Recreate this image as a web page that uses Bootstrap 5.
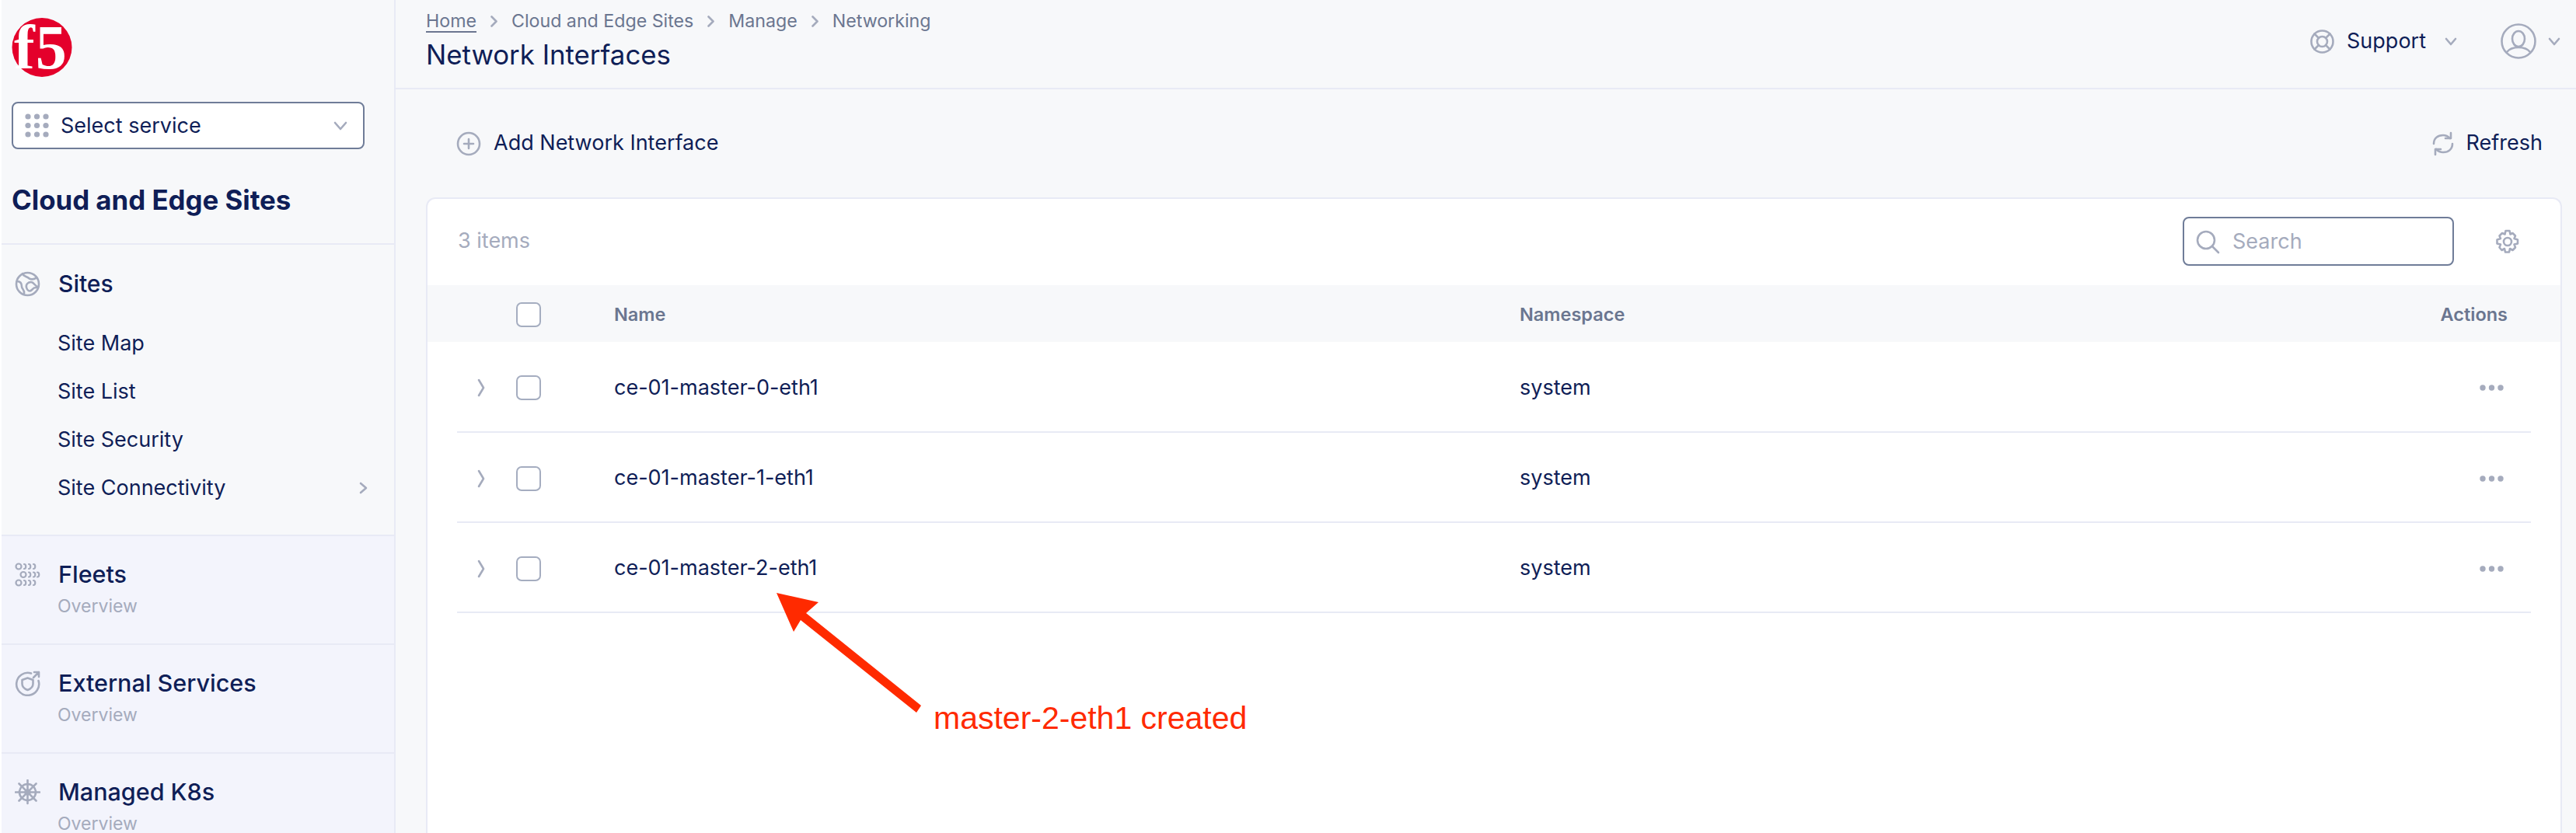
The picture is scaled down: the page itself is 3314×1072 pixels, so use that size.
<!DOCTYPE html>
<html lang="en">
<head>
<meta charset="utf-8">
<title>Network Interfaces</title>
<link href="https://cdn.jsdelivr.net/npm/bootstrap@5.3.0/dist/css/bootstrap.min.css" rel="stylesheet">
<style>
:root{--navy:#0f1e57;--muted:#a5abbd;--slate:#6b7690;--line:#e8eaf5;--page:#f7f8fa}
html,body{height:100%}
body{font-family:Inter,"Liberation Sans",sans-serif;font-size:27px;color:var(--navy);background:#fff;overflow:hidden;padding-left:2px;position:relative}
.ico{stroke:var(--muted);fill:none;stroke-width:2.6;stroke-linecap:round;stroke-linejoin:round;flex:none;display:block}
.ico-fill{fill:var(--muted);stroke:none}
.side{width:507px;flex:none;background:var(--page);border-right:2px solid var(--line);height:100%;overflow:hidden}
.side > *{flex:none}
.side-top{height:315px;padding:23px 38px 0 13px;border-bottom:2px solid var(--line)}
.logo{display:block;margin-bottom:32px;overflow:visible}
.svc{height:61px;border:2px solid #6f7c98;border-radius:8px;background:#fff;padding:0 20px 0 15px}
.svc span{margin-left:15px;font-size:27px;line-height:1}
.side-title{font-size:34.800px;font-weight:700;line-height:40px;margin:45px 0 0}
.sec{height:375px;padding:30px 0 0 17px;border-bottom:2px solid var(--line)}
.sec-head{height:40px;font-size:30px;font-weight:500;gap:23px;margin-bottom:26px}
.sub{height:62px;padding:0 34px 0 55px;font-size:27px}
.grp{height:140px;background:#f3f4fc;padding:29px 0 0 17px;border-bottom:2px solid var(--line)}
.grp-t{gap:23px;height:40px;font-size:30.500px;font-weight:500}
.grp-s{font-size:23px;color:var(--muted);margin:11px 0 0 55px;line-height:20px}
.main{background:var(--page);min-width:0;height:100%}
.top{height:115px;padding:0 20px 0 39px;border-bottom:2px solid var(--line);flex:none}
.crumbs{height:54px;font-size:23.200px;color:var(--slate);gap:18px;line-height:30px}
.crumbs u{text-underline-offset:5px;text-decoration-thickness:2px}
.page-t{font-size:34.800px;font-weight:400;line-height:32px;margin:0}
.top-r{padding-top:29px}
.tool{height:139px;padding:0 43px 0 78px;flex:none}
.tool-b{gap:16px;font-size:27px}
.panel{margin:0 18px 0 39px;background:#fff;border:2px solid var(--line);border-bottom:0;border-radius:12px 12px 0 0;flex:1 1 auto;min-height:0;overflow:hidden}
.panel-h{height:111px;padding:0 52px 2px 39px}
.count{color:var(--muted);font-size:27px}
.srch{width:349px;height:63px;border:2px solid #6f7c98;border-radius:8px;padding:2px 15px 0;gap:16px;color:var(--muted);font-size:27px;margin-right:53px}
.grid-t{table-layout:fixed;width:100%;border-collapse:collapse;margin:0}
.grid-t th{height:73px;background:var(--page);font-size:23.500px;font-weight:600;color:var(--slate);padding:2px 0 0;border:0;vertical-align:middle}
.grid-t td{height:116px;padding:3px 0 0;font-size:27px;color:var(--navy);border:0;border-bottom:2px solid var(--line);background:#fff;vertical-align:middle}
.grid-t td.gut{border-bottom:0}
.expander{margin-left:26px}
.tick{width:32px;height:32px;border:2px solid #a5adc0;border-radius:7px;background:#fff;display:block}
.dots{margin-right:35px}
.arrow{position:absolute;left:990px;top:755px}
.note{position:absolute;left:1201px;top:900px;font-family:"Liberation Sans",Arial,sans-serif;font-size:41px;line-height:48px;color:#ff2a00;white-space:nowrap}
</style>
</head>
<body class="d-flex">
<aside class="side d-flex flex-column">
  <div class="side-top">
    <svg class="logo" width="78" height="76" viewBox="0 0 78 76" role="img" aria-label="F5">
      <ellipse cx="39" cy="38" rx="38.500" ry="38" fill="#e4002b"/>
      <text x="3" y="65" font-family="Liberation Serif" font-weight="700" font-size="80" letter-spacing="1" fill="#fff">f5</text>
    </svg>
    <div class="svc d-flex align-items-center">
      <svg width="31" height="31" viewBox="0 0 31 31" class="ico-fill flex-none"><circle cx="4" cy="4" r="3.6"/><circle cx="15.500" cy="4" r="3.600"/><circle cx="27" cy="4" r="3.600"/><circle cx="4" cy="15.500" r="3.600"/><circle cx="15.500" cy="15.500" r="3.600"/><circle cx="27" cy="15.500" r="3.600"/><circle cx="4" cy="27" r="3.600"/><circle cx="15.500" cy="27" r="3.600"/><circle cx="27" cy="27" r="3.600"/></svg>
      <span>Select service</span>
      <svg class="ico ms-auto" width="18" height="12" viewBox="0 0 18 12"><path d="M2 2l7 8 7-8"/></svg>
    </div>
    <h2 class="side-title">Cloud and Edge Sites</h2>
  </div>
  <div class="sec">
    <div class="sec-head d-flex align-items-center">
      <svg class="ico" width="33" height="33" viewBox="0 0 33 33"><circle cx="16.500" cy="16.500" r="14.500"/><path d="M10 3c1 4 6 4 8 6s7 2 10-1M3 13c5 0 6 4 6 7s4 4 3 9M30 20c-4 0-5-6-9-6s-7 3-6 7 4 6 7 3 3-3 7-3"/></svg>
      <span>Sites</span>
    </div>
    <div class="sub d-flex align-items-center">Site Map</div>
    <div class="sub d-flex align-items-center">Site List</div>
    <div class="sub d-flex align-items-center">Site Security</div>
    <div class="sub d-flex align-items-center justify-content-between">Site Connectivity
      <svg class="ico" width="11" height="16" viewBox="0 0 11 16"><path d="M2 2l7 6-7 6"/></svg>
    </div>
  </div>
  <div class="grp">
    <div class="grp-t d-flex align-items-center">
      <svg class="ico" style="stroke-width:2.2" width="33" height="31" viewBox="0 0 33 31"><circle cx="5" cy="5" r="3.500"/><path d="M12 2c3 0 3 6 0 6M18 2c3 0 3 6 0 6M24 2c3 0 3 6 0 6"/><circle cx="11" cy="15.500" r="3.500"/><path d="M18 12.500c3 0 3 6 0 6M24 12.500c3 0 3 6 0 6M29 12.500c3 0 3 6 0 6"/><circle cx="5" cy="26" r="3.500"/><path d="M12 23c3 0 3 6 0 6M18 23c3 0 3 6 0 6M24 23c3 0 3 6 0 6"/></svg>
      <span>Fleets</span>
    </div>
    <div class="grp-s">Overview</div>
  </div>
  <div class="grp">
    <div class="grp-t d-flex align-items-center">
      <svg class="ico" width="33" height="33" viewBox="0 0 33 33"><path d="M21 3.500A14.500 14.500 0 1 0 30.500 13"/><path d="M24 9l7-7M25 2h6v6"/><path d="M16.500 9.500l7 2.500v5c0 4-3 6.500-7 8-4-1.500-7-4-7-8v-5z"/></svg>
      <span>External Services</span>
    </div>
    <div class="grp-s">Overview</div>
  </div>
  <div class="grp">
    <div class="grp-t d-flex align-items-center">
      <svg class="ico" width="33" height="33" viewBox="0 0 33 33"><circle cx="16.500" cy="16.500" r="10.500"/><circle cx="16.500" cy="16.500" r="3"/><path d="M16.500 1v30M1 16.500h31M5.500 5.500l22 22M27.500 5.500l-22 22"/></svg>
      <span>Managed K8s</span>
    </div>
    <div class="grp-s">Overview</div>
  </div>
</aside>

<main class="main flex-grow-1 d-flex flex-column">
  <header class="top d-flex justify-content-between">
    <div>
      <nav class="crumbs d-flex align-items-center" aria-label="breadcrumb">
        <u>Home</u>
        <svg class="ico" width="9" height="15" viewBox="0 0 9 15"><path d="M1.500 1.500l6 6-6 6"/></svg>
        <span>Cloud and Edge Sites</span>
        <svg class="ico" width="9" height="15" viewBox="0 0 9 15"><path d="M1.500 1.500l6 6-6 6"/></svg>
        <span>Manage</span>
        <svg class="ico" width="9" height="15" viewBox="0 0 9 15"><path d="M1.500 1.500l6 6-6 6"/></svg>
        <span>Networking</span>
      </nav>
      <h1 class="page-t">Network Interfaces</h1>
    </div>
    <div class="top-r d-flex align-items-start">
      <div class="d-flex align-items-center" style="height:48px">
        <svg class="ico" width="31" height="31" viewBox="0 0 31 31"><circle cx="15.500" cy="15.500" r="14"/><circle cx="15.500" cy="15.500" r="6.500"/><path d="M5.500 5.500l5.500 5.500M25.500 5.500L20 11M5.500 25.500l5.500-5.500M25.500 25.500L20 20"/></svg>
        <span class="ms-3">Support</span>
        <svg class="ico" style="margin-left:24px;margin-right:56px" width="16" height="11" viewBox="0 0 16 11"><path d="M2 2l6 7 6-7"/></svg>
        <svg class="ico" width="46" height="46" viewBox="0 0 46 46"><circle cx="23" cy="23" r="21.500"/><ellipse cx="23" cy="20" rx="8" ry="10"/><path d="M8 37c4-5 9-6 15-6s11 1 15 6"/></svg>
        <svg class="ico" style="margin-left:15px" width="16" height="11" viewBox="0 0 16 11"><path d="M2 2l6 7 6-7"/></svg>
      </div>
    </div>
  </header>

  <div class="tool d-flex align-items-center justify-content-between">
    <div class="tool-b d-flex align-items-center">
      <svg class="ico" width="32" height="32" viewBox="0 0 32 32"><circle cx="16" cy="16" r="14"/><path d="M16 10v12M10 16h12"/></svg>
      <span>Add Network Interface</span>
    </div>
    <div class="tool-b d-flex align-items-center">
      <svg class="ico" width="28" height="32" viewBox="0 0 28 32"><path d="M2 16C2 9 7 5 14 5c3 0 6 1 9 4M26 16c0 7-5 11-12 11-3 0-6-1-9-4"/><path d="M24 2v7h-7M4 30v-7h7"/></svg>
      <span>Refresh</span>
    </div>
  </div>

  <section class="panel">
    <div class="panel-h d-flex align-items-center justify-content-between">
      <span class="count">3 items</span>
      <div class="d-flex align-items-center">
        <div class="srch d-flex align-items-center">
          <svg class="ico" width="31" height="31" viewBox="0 0 31 31"><circle cx="13" cy="13" r="11"/><path d="M21 21l8 8"/></svg>
          <span>Search</span>
        </div>
        <svg class="ico" width="32" height="32" viewBox="0 0 32 32"><circle cx="16" cy="16" r="5"/><path d="M13.500 2h5l1 4.500 3-1.500 3.500 3.500-1.500 3.500 4.500 1.500v5l-4.500 1 1.500 4-3.500 3.500-3.500-2-1 4.500h-5l-1-4.500-3.500 2L5.500 23.500l1.500-4-4.500-1v-5L7 12 5.500 8.500 9 5l3.500 1.500z"/></svg>
      </div>
    </div>
    <table class="table grid-t">
      <colgroup><col style="width:38px"><col style="width:76px"><col style="width:126px"><col style="width:1165px"><col><col style="width:200px"><col style="width:38px"></colgroup>
      <thead>
        <tr><th></th><th></th><th><span class="tick"></span></th><th>Name</th><th>Namespace</th><th class="text-end" style="padding-right:30px">Actions</th><th></th></tr>
      </thead>
      <tbody>
        <tr><td class="gut"></td><td><svg class="ico expander" width="10" height="24" viewBox="0 0 10 24"><path d="M2 2l6 10-6 10"/></svg></td><td><span class="tick"></span></td><td>ce-01-master-0-eth1</td><td>system</td><td><svg class="ico-fill ms-auto d-block dots" width="31" height="8" viewBox="0 0 31 8"><circle cx="4" cy="4" r="3.700"/><circle cx="15.500" cy="4" r="3.700"/><circle cx="27" cy="4" r="3.700"/></svg></td><td class="gut"></td></tr>
        <tr><td class="gut"></td><td><svg class="ico expander" width="10" height="24" viewBox="0 0 10 24"><path d="M2 2l6 10-6 10"/></svg></td><td><span class="tick"></span></td><td>ce-01-master-1-eth1</td><td>system</td><td><svg class="ico-fill ms-auto d-block dots" width="31" height="8" viewBox="0 0 31 8"><circle cx="4" cy="4" r="3.700"/><circle cx="15.500" cy="4" r="3.700"/><circle cx="27" cy="4" r="3.700"/></svg></td><td class="gut"></td></tr>
        <tr><td class="gut"></td><td><svg class="ico expander" width="10" height="24" viewBox="0 0 10 24"><path d="M2 2l6 10-6 10"/></svg></td><td><span class="tick"></span></td><td>ce-01-master-2-eth1</td><td>system</td><td><svg class="ico-fill ms-auto d-block dots" width="31" height="8" viewBox="0 0 31 8"><circle cx="4" cy="4" r="3.700"/><circle cx="15.500" cy="4" r="3.700"/><circle cx="27" cy="4" r="3.700"/></svg></td><td class="gut"></td></tr>
      </tbody>
    </table>
  </section>
</main>

<svg class="arrow" width="210" height="170" viewBox="990 755 210 170"><polygon fill="#ff2a00" points="999,763 1053,775 1037,789 1185,908 1179,917 1030,798 1021,813"/></svg>
<span class="note">master-2-eth1 created</span>
<script src="https://cdn.jsdelivr.net/npm/bootstrap@5.3.0/dist/js/bootstrap.bundle.min.js"></script>
</body>
</html>
